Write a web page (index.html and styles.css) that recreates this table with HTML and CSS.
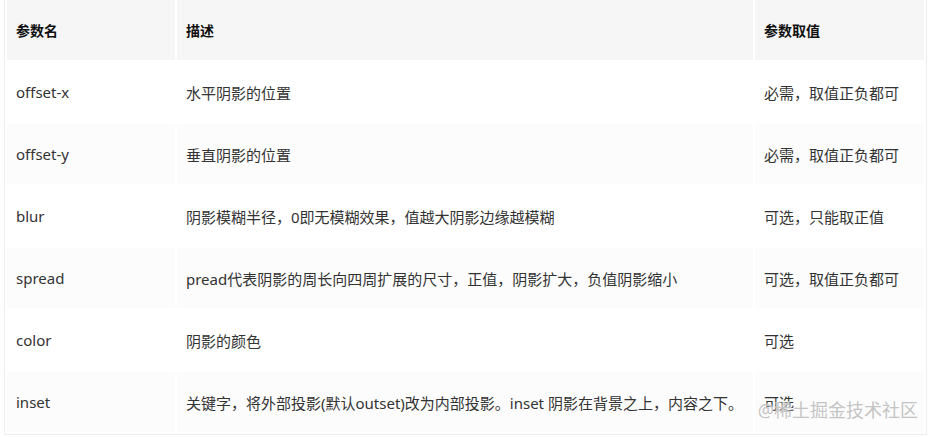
FILE: index.html
```html
<!DOCTYPE html>
<html>

<head>
  <meta charset="UTF-8">
  <title>box-shadow 参数</title>
  <link rel="stylesheet" href="styles.css">
</head>

<body>
  <div class="tabla-caja">
    <table class="tabla">
      <thead>
        <tr>
          <th class="col-nombre">参数名</th>
          <th class="col-desc">描述</th>
          <th class="col-valor">参数取值</th>
        </tr>
      </thead>
      <tbody>
        <tr>
          <td>offset-x</td>
          <td>水平阴影的位置</td>
          <td>必需，取值正负都可</td>
        </tr>
        <tr>
          <td>offset-y</td>
          <td>垂直阴影的位置</td>
          <td>必需，取值正负都可</td>
        </tr>
        <tr>
          <td>blur</td>
          <td>阴影模糊半径，0即无模糊效果，值越大阴影边缘越模糊</td>
          <td>可选，只能取正值</td>
        </tr>
        <tr>
          <td>spread</td>
          <td>pread代表阴影的周长向四周扩展的尺寸，正值，阴影扩大，负值阴影缩小</td>
          <td>可选，取值正负都可</td>
        </tr>
        <tr>
          <td>color</td>
          <td>阴影的颜色</td>
          <td>可选</td>
        </tr>
        <tr>
          <td>inset</td>
          <td>关键字，将外部投影(默认outset)改为内部投影。inset 阴影在背景之上，内容之下。</td>
          <td>可选</td>
        </tr>
      </tbody>
    </table>
    <!-- marca de agua -->
    <span class="marca">@稀土掘金技术社区</span>
  </div>
</body>

</html>
```

FILE: styles.css
```css
body {
  font-family: "Noto Sans", "Noto Sans CJK SC", sans-serif;
  background-color: #ffffff;
  margin: 0;
  padding: 0;
}

.tabla-caja {
  position: relative;
  width: 921px;
  margin-left: 4px;
  border-left: 1px solid #eeeeee;
  border-right: 1px solid #eeeeee;
  border-bottom: 1px solid #eeeeee;
}

.tabla {
  width: 100%;
  border-collapse: separate;
  border-spacing: 2px 2px;
  margin-top: -2px;
  font-size: 15px;
  color: #333333;
  table-layout: fixed;
}

.tabla th,
.tabla td {
  height: 60px;
  padding: 0 9px;
  text-align: left;
  white-space: nowrap;
}

.tabla th {
  background-color: #f6f6f6;
  color: #111111;
  font-weight: bold;
  font-size: 14px;
}

.col-nombre {
  width: 150px;
}

.col-desc {
  width: 558px;
}

.tabla tbody tr:nth-child(even) td {
  background-color: #fcfcfc;
}

.marca {
  position: absolute;
  right: 8px;
  bottom: 12px;
  font-size: 18px;
  color: #c4c4c4;
  text-shadow: 0 0 2px #ffffff;
}
```
